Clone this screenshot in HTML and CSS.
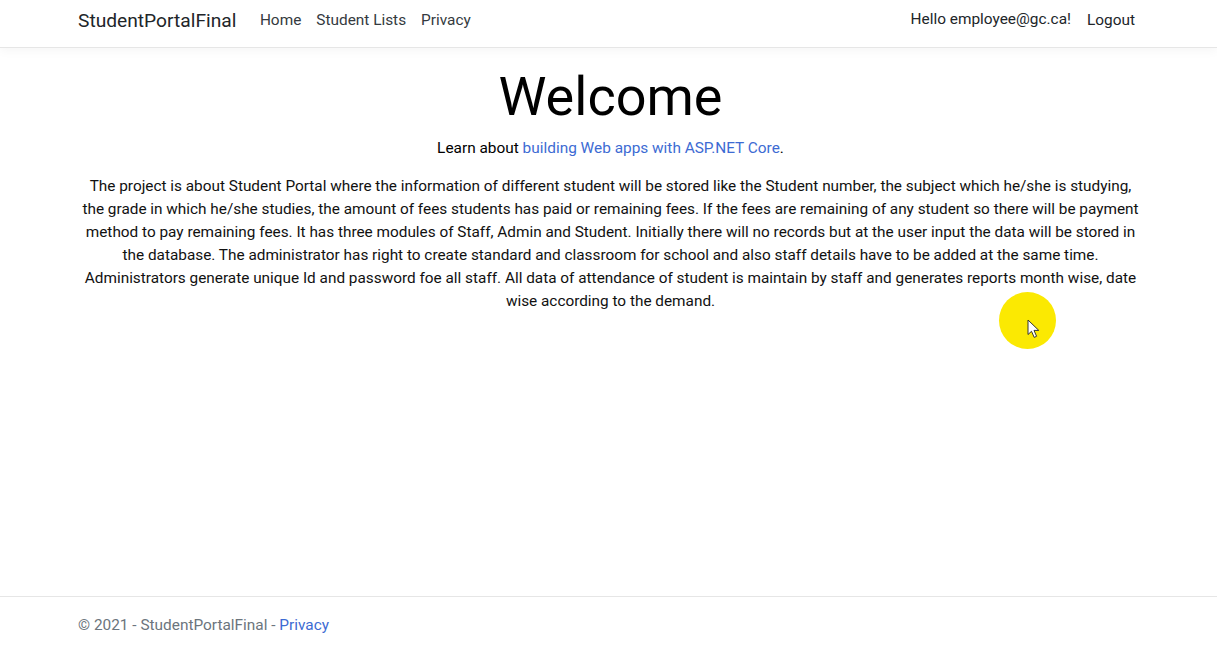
FILE: index.html
```html
<!DOCTYPE html>
<html lang="en">
<head>
<meta charset="utf-8">
<title>Home Page - StudentPortalFinal</title>
<link rel="stylesheet" href="styles.css">
</head>
<body>
<header class="topbar">
  <nav class="container nav">
    <a class="brand" href="#">StudentPortalFinal</a>
    <ul class="links">
      <li><a href="#">Home</a></li>
      <li><a href="#">Student Lists</a></li>
      <li><a href="#">Privacy</a></li>
    </ul>
    <ul class="user">
      <li><a class="hello" href="#">Hello employee@gc.ca!</a></li>
      <li><button class="logout" type="button">Logout</button></li>
    </ul>
  </nav>
</header>
<main class="container main">
  <h1 class="title">Welcome</h1>
  <p class="learn">Learn about <a href="#">building Web apps with ASP.NET Core</a>.</p>
  <p class="desc">The project is about Student Portal where the information of different student will be stored like the Student number, the subject which he/she is studying, the grade in which he/she studies, the amount of fees students has paid or remaining fees. If the fees are remaining of any student so there will be payment method to pay remaining fees. It has three modules of Staff, Admin and Student. Initially there will no records but at the user input the data will be stored in the database. The administrator has right to create standard and classroom for school and also staff details have to be added at the same time. Administrators generate unique Id and password foe all staff. All data of attendance of student is maintain by staff and generates reports month wise, date wise according to the demand.</p>
</main>
<footer class="footer">
  <div class="container">&copy; 2021 - StudentPortalFinal - <a href="#">Privacy</a></div>
</footer>
<div class="cursor-spot">
  <svg class="cursor" width="14" height="20" viewBox="0 0 14 20"><path d="M1 1 L1 15.5 L4.5 12.3 L7.2 18.4 L9.6 17.3 L7 11.4 L11.8 11.4 Z" fill="#fff" stroke="#333" stroke-width="1" stroke-linejoin="round"/></svg>
</div>
</body>
</html>
```
FILE: styles.css
```css
* { box-sizing: border-box; }
html, body { height: 100%; }
body {
  margin: 0;
  font-family: Roboto, "Noto Sans", "Liberation Sans", sans-serif;
  font-size: 15.4px;
  line-height: 23px;
  color: #212529;
  background: #fff;
  display: flex;
  flex-direction: column;
  min-height: 100vh;
  position: relative;
}
a { color: #3d6bd3; text-decoration: none; }
.container {
  width: 1061px;
  margin: 0 auto;
}
.topbar {
  height: 48px;
  border-bottom: 1px solid #e6e6e6;
  box-shadow: 0 3px 10px rgba(0, 0, 0, 0.04);
  background: #fff;
}
.nav {
  display: flex;
  align-items: center;
  height: 47px;
  padding-bottom: 6px;
}
.brand {
  font-size: 19.2px;
  color: #212529;
  margin-right: 16px;
}
.links, .user {
  list-style: none;
  margin: 0;
  padding: 0;
  display: flex;
  align-items: center;
}
.links { flex: 1; }
.links a {
  display: block;
  padding: 0 7.5px;
  color: #343a40;
  font-size: 15.4px;
}
.hello {
  color: #212529;
  font-size: 15.4px;
  padding: 0 8px;
  display: block;
  padding-bottom: 3px;
}
.logout {
  font: inherit;
  font-size: 15.4px;
  color: #212529;
  background: none;
  border: 0;
  padding: 0 4px 0 8px;
  cursor: pointer;
}
.main {
  flex: 1;
  text-align: center;
  padding-top: 15px;
  padding-left: 4px;
}
.title {
  font-size: 54px;
  font-weight: 400;
  line-height: 67px;
  margin: 0 0 7px;
  color: #000;
}
.learn {
  margin: 0 0 15px;
  color: #000;
}
.desc {
  margin: 0 -5px;
  font-size: 15.35px;
  color: #111;
}
.footer {
  height: 55px;
  border-top: 1px solid #e6e6e6;
  color: #6c757d;
  font-size: 15.4px;
  line-height: 56px;
}
.cursor-spot {
  position: absolute;
  left: 999px;
  top: 292px;
  width: 57px;
  height: 57px;
  border-radius: 50%;
  background: #fbe902;
}
.cursor {
  position: absolute;
  left: 28px;
  top: 27px;
}
```
